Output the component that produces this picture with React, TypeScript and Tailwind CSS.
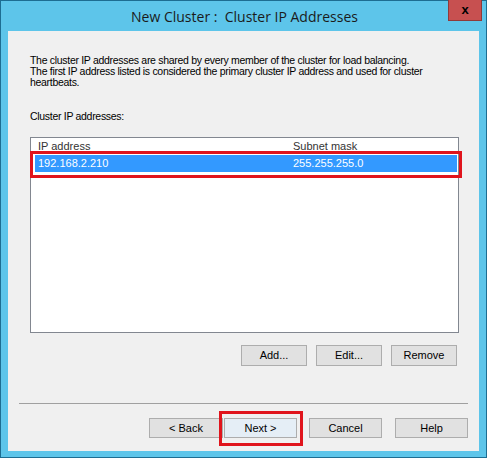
import React from 'react';

const btn =
  'flex items-center justify-center border border-[#adadad] bg-[#e1e1e1] text-[11px] text-black';

function Button({ label, width, height, primary }: { label: string; width: string; height: string; primary?: boolean }) {
  return (
    <div
      className={`${btn} ${width} ${height} ${primary ? 'border-[#3c7fb1] bg-[#e5eef6]' : ''}`}
    >
      {label}
    </div>
  );
}

export default function App() {
  return (
    <div className="w-[487px] h-[458px] bg-[#1d6d92] p-px font-['Liberation_Sans',Arial,sans-serif]">
      <div className="relative w-[485px] h-[456px] bg-[#5dc5ea]">
        {/* title bar */}
        <div className="h-[30px] flex items-center justify-center">
          <span className="font-['Open_Sans',sans-serif] text-[14px] text-[#1b1b1b] pl-[2px] pt-[1px] whitespace-pre">
            New Cluster :  Cluster IP Addresses
          </span>
        </div>
        <div className="absolute right-[4px] top-[-1px] w-[34px] h-[21px] bg-[#c75050] border border-[#8f3a3a] border-t-0 flex items-center justify-center">
          <span className="font-['Liberation_Sans',sans-serif] text-[13px] font-bold text-black leading-none pb-[2px]">x</span>
        </div>

        {/* client area */}
        <div className="ml-[7px] w-[471px] h-[420px] bg-[#f0f0f0] flex flex-col">
          <p className="mt-[24px] pl-[22px] pr-[10px] text-[10.5px] leading-[11px] tracking-[-0.3px] text-black">
            The cluster IP addresses are shared by every member of the cluster for load balancing.
            <br />
            The first IP address listed is considered the primary cluster IP address and used for cluster
            <br />
            heartbeats.
          </p>
          <p className="mt-[23px] pl-[22px] text-[10.5px] leading-[11px] tracking-[-0.3px] text-black">
            Cluster IP addresses:
          </p>

          <div className="relative mt-[15px] ml-[22px] w-[429px] h-[196px] border border-[#828790] bg-white">
            <div className="h-[16px] flex items-center text-[11px] text-[#333]">
              <span className="pl-[7px] w-[262px]">IP address</span>
              <span>Subnet mask</span>
            </div>
            <div className="ml-[4px] mr-px mt-px h-[17px] bg-[#3399ff] flex items-center text-[11px] text-white">
              <span className="pl-[3px] w-[258px]">192.168.2.210</span>
              <span>255.255.255.0</span>
            </div>
            <div className="absolute left-[-1px] top-[13px] w-[432px] h-[27px] border-[3px] border-[#e0141c]" />
          </div>

          <div className="mt-[12px] mr-[22px] flex justify-end gap-[9px]">
            <Button label="Add..." width="w-[66px]" height="h-[21px]" />
            <Button label="Edit..." width="w-[66px]" height="h-[21px]" />
            <Button label="Remove" width="w-[66px]" height="h-[21px]" />
          </div>

          <div className="mt-[37px] mx-[11px] h-px bg-[#a0a0a0]" />

          <div className="mt-[14px] mr-[11px] flex justify-end">
            <Button label="< Back" width="w-[74px]" height="h-[20px]" />
            <div className="relative ml-px">
              <Button label="Next >" width="w-[73px]" height="h-[20px]" primary />
              <div className="absolute left-[-5px] top-[-7px] w-[84px] h-[35px] border-[3px] border-[#e0141c]" />
            </div>
            <div className="ml-[12px]">
              <Button label="Cancel" width="w-[73px]" height="h-[20px]" />
            </div>
            <div className="ml-[13px]">
              <Button label="Help" width="w-[73px]" height="h-[20px]" />
            </div>
          </div>
        </div>
      </div>
    </div>
  );
}
